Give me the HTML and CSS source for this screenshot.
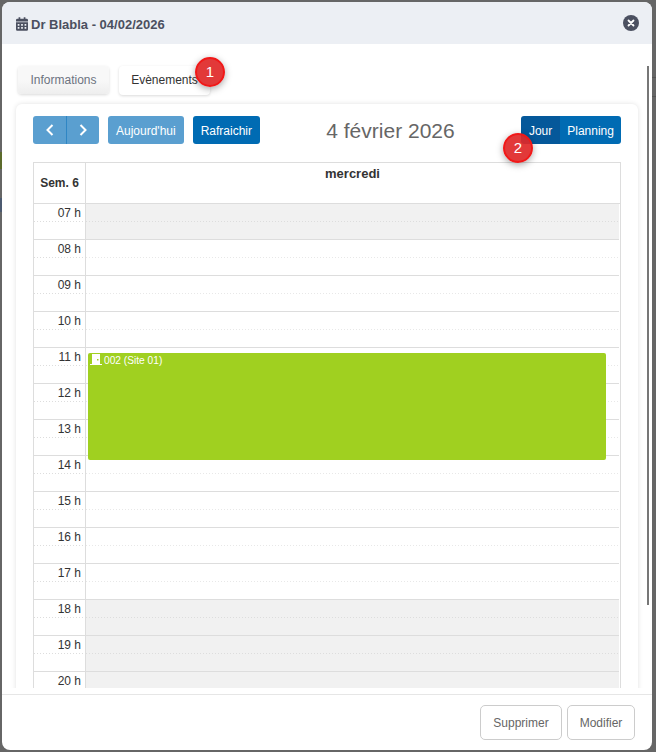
FILE: index.html
```html
<!DOCTYPE html>
<html lang="fr">
    <head>
        <meta charset="UTF-8">
        <title>Dr Blabla - 04/02/2026</title>
        <link rel="stylesheet" href="styles.css">
    </head>
    <body>
        <div class="modal">
            <div class="modal-header">
                <h1>
                    <svg class="cal-icon" viewBox="0 0 14 16" width="12" height="14"><path fill="#4b5060" fill-rule="evenodd" d="M3 0h2v2h4V0h2v2h1.500A1.500 1.500 0 0 1 14 3.500V5H0V3.500A1.500 1.500 0 0 1 1.500 2H3zM0 6h14v8.500a1.500 1.500 0 0 1-1.500 1.500h-11A1.500 1.500 0 0 1 0 14.500zM2 8v2h2V8zm4 0v2h2V8zm4 0v2h2V8zm-8 3.500v2h2v-2zm4 0v2h2v-2zm4 0v2h2v-2z"/></svg>
                    Dr Blabla - 04/02/2026
                </h1>
                <button class="close-btn" type="button">
                    <svg viewBox="0 0 8 8" width="8" height="8"><path d="M1.500 1.500l5 5m0-5l-5 5" stroke="#fff" stroke-width="1.800" stroke-linecap="round"/></svg>
                </button>
            </div>

            <div class="modal-body">
                <div class="tabs">
                    <div class="tab">Informations</div>
                    <div class="tab tab-active">Evènements</div>
                </div>

                <div class="card">
                    <div class="toolbar">
                        <div class="toolbar-left">
                            <div class="btn-group">
                                <button class="btn btn-light btn-arrow" type="button">
                                    <svg viewBox="0 0 8 12" width="8" height="12"><path d="M6.500 1L1.500 6l5 5" fill="none" stroke="#fff" stroke-width="2"/></svg>
                                </button>
                                <button class="btn btn-light btn-arrow" type="button">
                                    <svg viewBox="0 0 8 12" width="8" height="12"><path d="M1.500 1l5 5-5 5" fill="none" stroke="#fff" stroke-width="2"/></svg>
                                </button>
                            </div>
                            <button class="btn btn-light" type="button">Aujourd'hui</button>
                            <button class="btn btn-dark" type="button">Rafraichir</button>
                        </div>
                        <h2>4 février 2026</h2>
                        <div class="btn-group view-switch">
                            <button class="btn btn-dark btn-current" type="button">Jour</button>
                            <button class="btn btn-dark" type="button">Planning</button>
                        </div>
                    </div>

                    <div class="agenda">
                        <div class="agenda-head">
                            <div class="week">Sem. 6</div>
                            <div class="day">mercredi</div>
                        </div>
                        <div class="agenda-rows">
                            <div class="row"><div class="hour">07 h</div><div class="slot off"></div></div>
                            <div class="row"><div class="hour">08 h</div><div class="slot"></div></div>
                            <div class="row"><div class="hour">09 h</div><div class="slot"></div></div>
                            <div class="row"><div class="hour">10 h</div><div class="slot"></div></div>
                            <div class="row"><div class="hour">11 h</div><div class="slot"></div></div>
                            <div class="row"><div class="hour">12 h</div><div class="slot"></div></div>
                            <div class="row"><div class="hour">13 h</div><div class="slot"></div></div>
                            <div class="row"><div class="hour">14 h</div><div class="slot"></div></div>
                            <div class="row"><div class="hour">15 h</div><div class="slot"></div></div>
                            <div class="row"><div class="hour">16 h</div><div class="slot"></div></div>
                            <div class="row"><div class="hour">17 h</div><div class="slot"></div></div>
                            <div class="row"><div class="hour">18 h</div><div class="slot off"></div></div>
                            <div class="row"><div class="hour">19 h</div><div class="slot off"></div></div>
                            <div class="row"><div class="hour">20 h</div><div class="slot off"></div></div>
                            <div class="event">
                                <svg viewBox="0 0 12 11" width="12" height="11"><path fill="#fff" fill-rule="evenodd" d="M2 0h8v10h2v1H0v-1h2zm5 5v1.500h1.500V5z"/></svg>
                                002 (Site 01)
                            </div>
                        </div>
                    </div>
                </div>
                <div class="scroll-thumb"></div>
            </div>

            <div class="modal-footer">
                <button class="btn-outline btn-delete" type="button">Supprimer</button>
                <button class="btn-outline btn-edit" type="button">Modifier</button>
            </div>
        </div>

        <div class="marker marker-one">1</div>
        <div class="marker marker-two">2</div>
    </body>
</html>
```

FILE: styles.css
```css
* {
    margin: 0;
    padding: 0;
    box-sizing: border-box;
    font-family: 'Liberation Sans', Arial, sans-serif;
}

html, body {
    height: 752px;
    overflow: hidden;
}

/* what shows of the dimmed page behind the modal */
body {
    position: relative;
    padding: 2px 4px 2px 2px;
    background:
        linear-gradient(#5c6b2c, #5c6b2c) 0 152px / 2px 17px no-repeat,
        linear-gradient(#4c5a70, #4c5a70) 0 198px / 2px 14px no-repeat,
        linear-gradient(#555, #555) 652px 77px / 4px 1px no-repeat,
        linear-gradient(#555, #555) 652px 96px / 4px 1px no-repeat,
        #666;
}

.modal {
    display: flex;
    flex-direction: column;
    height: 748px;
    background: #fff;
    border-radius: 8px;
    overflow: hidden;
}

.modal-header {
    display: flex;
    align-items: center;
    justify-content: space-between;
    height: 42px;
    padding: 0 13px 0 14px;
    background: #eceff4;
}

.modal-header h1 {
    display: flex;
    align-items: center;
    gap: 3px;
    padding-top: 2px;
    font-size: 13px;
    font-weight: bold;
    color: #4b5060;
}

.close-btn {
    display: flex;
    align-items: center;
    justify-content: center;
    width: 16px;
    height: 16px;
    border: none;
    border-radius: 50%;
    background: #4b5060;
}

.modal-body {
    position: relative;
    flex: 1;
    min-height: 0;
    margin-bottom: 6px;
    padding: 22px 14px 0;
    overflow: hidden;
}

.tabs {
    display: flex;
    gap: 10px;
    padding-left: 2px;
    margin-bottom: 9px;
}

.tab {
    width: 91px;
    height: 28px;
    line-height: 28px;
    text-align: center;
    font-size: 12px;
    color: #6c7380;
    border-radius: 4px;
    background: linear-gradient(#f8f8f8 50%, #eeeeee);
    box-shadow: 0 1px 3px rgba(0, 0, 0, 0.15);
}

.tab-active {
    height: 29px;
    color: #333;
    background: #fff;
}

.card {
    height: 600px;
    padding: 12px 17px;
    border-radius: 6px;
    background: #fff;
    box-shadow: 0 0 5px rgba(0, 0, 0, 0.12);
}

.toolbar {
    display: flex;
    align-items: center;
    justify-content: space-between;
    margin-bottom: 18px;
}

.toolbar-left {
    display: flex;
    gap: 9px;
}

.toolbar h2 {
    padding-top: 2px;
    font-size: 21px;
    font-weight: normal;
    color: #666;
}

.btn-group {
    display: flex;
}

.btn {
    height: 28px;
    padding: 2px 8px 0;
    border: none;
    border-radius: 3px;
    font-size: 12px;
    color: #fff;
}

.btn-light {
    background: #5a9fd0;
}

.btn-dark {
    background: #006bb3;
}

.btn-current {
    background: #05589a;
}

.btn-arrow {
    display: flex;
    align-items: center;
    justify-content: center;
    width: 33px;
    padding: 0;
    border-radius: 3px 0 0 3px;
}

.btn-group .btn-arrow + .btn-arrow {
    border-left: 1px solid #2f86c4;
    border-radius: 0 3px 3px 0;
}

.view-switch .btn:first-child {
    border-radius: 3px 0 0 3px;
}

.view-switch .btn:last-child {
    padding: 2px 7px 0;
    border-radius: 0 3px 3px 0;
}

.agenda {
    border: 1px solid #ddd;
    border-bottom: none;
}

.agenda-head {
    display: flex;
    height: 41px;
    padding-right: 1px;
    border-bottom: 1px solid #ddd;
}

.week {
    width: 52px;
    line-height: 41px;
    text-align: center;
    font-size: 12px;
    font-weight: bold;
    color: #333;
    border-right: 1px solid #ddd;
}

.day {
    flex: 1;
    padding-top: 3px;
    text-align: center;
    font-size: 13px;
    font-weight: bold;
    color: #333;
}

.agenda-rows {
    position: relative;
    padding-right: 1px;
}

.row {
    display: flex;
    height: 36px;
    border-bottom: 1px solid #ddd;
}

.hour {
    width: 52px;
    padding: 2px 4px 0 0;
    text-align: right;
    font-size: 12px;
    color: #333;
    border-right: 1px solid #ddd;
    background: repeating-linear-gradient(90deg, #ddd 0 1px, transparent 1px 3px) 0 17px / 100% 1px no-repeat;
}

.slot {
    flex: 1;
    background: repeating-linear-gradient(90deg, #e8e8e8 0 1px, transparent 1px 3px) 0 17px / 100% 1px no-repeat;
}

.off {
    background: repeating-linear-gradient(90deg, #ddd 0 1px, transparent 1px 3px) 0 17px / 100% 1px no-repeat, #f1f1f1;
}

.event {
    position: absolute;
    top: 149px;
    left: 54px;
    width: 518px;
    height: 107px;
    padding: 1px 2px;
    display: flex;
    align-items: flex-start;
    gap: 2px;
    font-size: 10.200px;
    line-height: 13px;
    color: #fff;
    background: #a0d020;
    border-radius: 2px;
}

.scroll-thumb {
    position: absolute;
    top: 22px;
    right: 3px;
    width: 2px;
    height: 539px;
    background: #777;
}

.modal-footer {
    display: flex;
    justify-content: flex-end;
    gap: 5px;
    height: 56px;
    padding: 10px 17px 0 0;
    border-top: 1px solid #e6e6e6;
}

.btn-outline {
    height: 35px;
    border: 1px solid #ccc;
    border-radius: 5px;
    background: #fff;
    font-size: 12px;
    color: #666;
}

.btn-delete {
    width: 82px;
}

.btn-edit {
    width: 68px;
}

.marker {
    position: absolute;
    width: 30px;
    height: 30px;
    line-height: 26px;
    text-align: center;
    font-size: 15px;
    color: #fff;
    background: rgba(224, 40, 40, 0.92);
    border: 2px solid #f01818;
    border-radius: 50%;
    box-shadow: 0 2px 7px rgba(0, 0, 0, 0.35);
}

.marker-one {
    top: 57px;
    left: 195px;
}

.marker-two {
    top: 133px;
    left: 503px;
}
```
